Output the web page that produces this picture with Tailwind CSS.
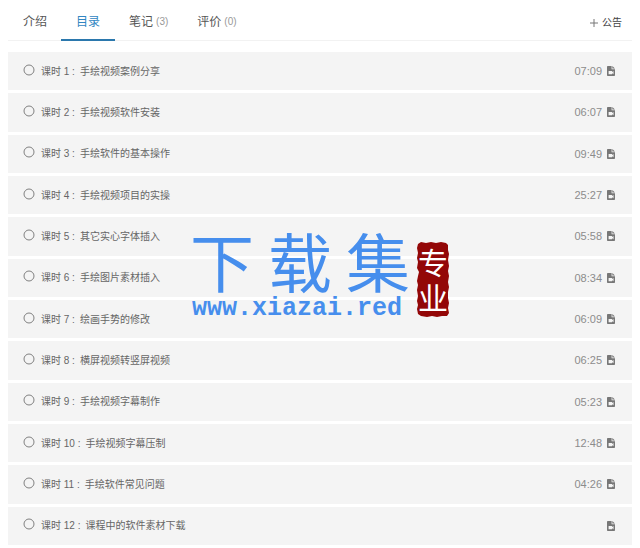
<!DOCTYPE html>
<html lang="zh-CN">
<head>
<meta charset="utf-8">
<meta name="viewport" content="width=device-width, initial-scale=1">
<title>课程目录</title>
<script src="https://cdn.jsdelivr.net/npm/@tailwindcss/browser@4"></script>
</head>
<body class="relative flex min-h-screen flex-col bg-white px-2 pb-[3px] font-['Liberation_Sans','Noto_Sans_CJK_SC',sans-serif] text-[#666]">
<svg class="hidden" aria-hidden="true">
  <symbol id="doc" viewBox="0 0 8 10">
    <path fill="currentColor" fill-rule="evenodd" d="M.8 0H4.6V3.3H8V9.3Q8 10 7.2 10H.8Q0 10 0 9.3V.7Q0 0 .8 0ZM1.6 5V8.2H5V7.2L6.5 8.2V5L5 6V5Z"/>
    <path fill="currentColor" d="M5.3 0L8 2.6H5.3Z"/>
  </symbol>
</svg>

<header class="flex h-[41px] items-stretch justify-between shadow-[inset_0_-1px_0_#f2f2f2]">
  <nav class="flex -space-x-px text-xs text-[#555]">
    <a href="#intro" class="flex items-center px-[15px] pt-[2px]">介绍</a>
    <a href="#list" aria-current="page" class="flex items-center border-b-2 border-[#2b78ad] px-[15px] pt-[4px] text-[#3186c2]">目录</a>
    <a href="#notes" class="flex items-center gap-[3px] px-[15px] pt-[2px]">笔记<span class="text-[10px] text-[#999]">(3)</span></a>
    <a href="#reviews" class="flex items-center gap-[3px] px-[15px] pt-[2px]">评价<span class="text-[10px] text-[#999]">(0)</span></a>
  </nav>
  <button type="button" class="flex items-center gap-1 px-[10px] pt-[4px] text-[10px] text-[#444]">
    <svg class="size-2" viewBox="0 0 8 8" aria-hidden="true"><path d="M4 0V8M0 4H8" stroke="#777" fill="none"/></svg>公告
  </button>
</header>

<main class="flex flex-1 flex-col pt-[11px]">
  <ol id="lessons" class="grid flex-1 auto-rows-fr gap-[3px] text-[10px]"></ol>
</main>

<template id="lesson">
  <li class="flex bg-[#f4f4f4]">
    <a href="#lesson" class="flex flex-1 items-center py-2 pr-[17px] pl-[15px]">
      <svg class="mr-[6px] mb-[3px] size-3" viewBox="0 0 12 12" aria-hidden="true"><circle cx="6" cy="6" r="5" fill="none" stroke="#808080"/></svg>
      <span data-label class="mr-[5px]"></span>
      <span data-title class="flex-1"></span>
      <span data-time class="mr-[5px] text-[11px] text-[#8c8c8c]"></span>
      <svg class="h-[10px] w-2 text-[#777]" aria-hidden="true"><use href="#doc"/></svg>
    </a>
  </li>
</template>

<div class="pointer-events-none absolute top-[223px] left-1/2 flex -translate-x-[130px] items-start gap-[7px] text-[#468eed]">
  <div>
    <div class="flex gap-[14px] font-['Noto_Sans_CJK_SC',sans-serif] text-[64px] leading-[72px] font-normal"><span>下</span><span>载</span><span>集</span></div>
    <div class="pl-[2px] font-['Liberation_Mono',monospace] text-[25px] leading-[28px] font-bold">www.xiazai.red</div>
  </div>
  <div class="relative mt-[19px] h-[75px] w-8">
    <svg class="absolute inset-0 size-full" viewBox="0 0 32 75" aria-hidden="true">
      <path fill="#930707" d="M1 2L4 0 9 1 14 0 19 1 24 0 29 1 31 3 31 8 32 12 31 18 32 24 31 29 32 34 31 40 32 45 31 50 31 56 32 61 31 66 32 71 30 74 25 74 20 75 15 74 10 75 4 74 1 72 0 67 1 63 0 59 1 54 0 48 1 43 0 39 1 34 2 30 0 26 1 20 0 16 1 11 0 6Z"/>
    </svg>
    <div class="relative flex flex-col items-center pt-[2px] font-['Noto_Sans_CJK_SC',sans-serif] text-[30px] leading-[35px] text-white"><span>专</span><span>业</span></div>
  </div>
</div>

<script>
const lessons = [
  ['手绘视频案例分享', '07:09'], ['手绘视频软件安装', '06:07'],
  ['手绘软件的基本操作', '09:49'], ['手绘视频项目的实操', '25:27'],
  ['其它实心字体插入', '05:58'], ['手绘图片素材插入', '08:34'],
  ['绘画手势的修改', '06:09'], ['横屏视频转竖屏视频', '06:25'],
  ['手绘视频字幕制作', '05:23'], ['手绘视频字幕压制', '12:48'],
  ['手绘软件常见问题', '04:26'], ['课程中的软件素材下载', '']
];
const list = document.getElementById('lessons');
const tpl = document.getElementById('lesson');
lessons.forEach(([title, time], i) => {
  const row = tpl.content.cloneNode(true);
  row.querySelector('[data-label]').textContent = `课时 ${i + 1} :`;
  row.querySelector('[data-title]').textContent = title;
  row.querySelector('[data-time]').textContent = time;
  list.append(row);
});
</script>
</body>
</html>
